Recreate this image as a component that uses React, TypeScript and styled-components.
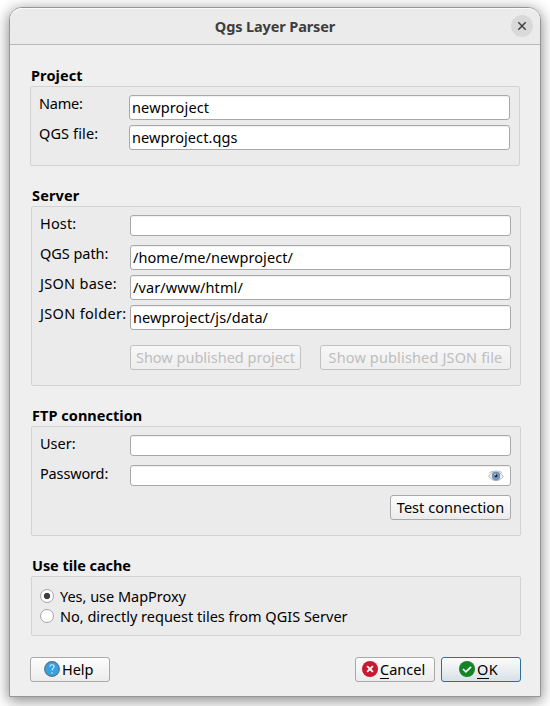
import React from 'react';
import styled, { createGlobalStyle, css } from 'styled-components';

const GlobalStyle = createGlobalStyle`
  *, *::before, *::after { box-sizing: border-box; }
  html, body { margin: 0; height: 100%; overflow: hidden; background: #fff; }
  body, input, button {
    font-family: "Noto Sans", "Open Sans", sans-serif;
    font-size: 14.5px;
    color: #000;
  }
`;

const Desktop = styled.div`
  width: 550px;
  height: 706px;
  padding: 7px 9px 9px;
  overflow: hidden;
`;

const Dialog = styled.main`
  width: 532px;
  height: 690px;
  display: flex;
  flex-direction: column;
  background: #efefef;
  border: 1px solid #969696;
  border-radius: 13px 13px 0 0;
  box-shadow: 0 3px 14px 1px rgba(0, 0, 0, 0.45);
`;

const TitleBar = styled.header`
  height: 37px;
  flex: none;
  display: grid;
  grid-template-columns: 29px 1fr 22px;
  align-items: center;
  padding-right: 7px;
  background: #ebebeb;
  border-bottom: 1px solid #b9b9b9;
  border-radius: 12px 12px 0 0;
  box-shadow: inset 0 1px 0 #fafafa;
`;

const WindowTitle = styled.h1`
  grid-column: 2;
  margin: 0;
  text-align: center;
  font-size: 14.5px;
  line-height: 20px;
  font-weight: 700;
  letter-spacing: -0.12px;
  color: #3d3d3d;
`;

const CloseButton = styled.button`
  width: 22px;
  height: 22px;
  display: flex;
  align-items: center;
  justify-content: center;
  padding: 0;
  border: 0;
  border-radius: 50%;
  background: #d9d9d9;
`;

const Content = styled.div`
  padding: 21px 19px 0 20px;
  display: flex;
  flex-direction: column;
  gap: 20px;
`;

const Section = styled.section<{ $flush?: boolean }>`
  width: 490px;
  margin-left: ${p => (p.$flush ? 0 : 1)}px;
`;

const SectionTitle = styled.h2<{ $track: number }>`
  margin: 0;
  height: 20px;
  padding-left: 1px;
  font-size: 14.5px;
  line-height: 19px;
  font-weight: 700;
  letter-spacing: ${p => p.$track}px;
  white-space: nowrap;
`;

const GroupBox = styled.div<{ $height: number }>`
  height: ${p => p.$height}px;
  padding: 8px 9px 0 8px;
  background: #ebebeb;
  border: 1px solid #d3d3d3;
  border-radius: 2px;
`;

const FormRow = styled.div`
  display: grid;
  grid-template-columns: 90px 381px;
  align-items: start;
  height: 30px;
`;

const FieldLabel = styled.label<{ $track: number }>`
  line-height: 17px;
  letter-spacing: ${p => p.$track}px;
  white-space: nowrap;
`;

const FieldFrame = styled.div<{ $short?: boolean }>`
  height: ${p => (p.$short ? 21 : 25)}px;
  display: flex;
  align-items: center;
  padding-right: 6px;
  background: #fff;
  border: 1px solid #a9a9a9;
  border-radius: 3px;
  box-shadow: inset 0 1px 0 #efefef;
`;

const TextInput = styled.input<{ $track: number }>`
  flex: 1;
  min-width: 0;
  height: 100%;
  padding: 0 0 2px 2px;
  border: 0;
  outline: 0;
  background: transparent;
  letter-spacing: ${p => p.$track}px;
`;

const ButtonRow = styled.div<{ $top: number }>`
  display: flex;
  justify-content: flex-end;
  gap: 19px;
  padding-top: ${p => p.$top}px;
`;

const PushButton = styled.button<{ $width: number; $track: number; $primary?: boolean; $start?: number }>`
  width: ${p => p.$width}px;
  height: 25px;
  flex: none;
  display: flex;
  align-items: center;
  justify-content: ${p => (p.$start === undefined ? 'center' : 'flex-start')};
  gap: 2px;
  padding: 0 0 0 ${p => p.$start ?? 0}px;
  border: 1px solid #a9a9a9;
  border-radius: 3px;
  background: linear-gradient(#fdfdfd, #ececec);
  line-height: 23px;
  letter-spacing: ${p => p.$track}px;
  white-space: nowrap;
  &:disabled {
    color: #bebebe;
    border-color: #c1c1c1;
    background: linear-gradient(#f7f7f7, #eeeeee);
  }
  ${p =>
    p.$primary &&
    css`
      border-color: #2c6f9b;
      background: linear-gradient(#fbfcfd, #d9e1e6);
    `}
`;

const ButtonIcon = styled.svg`
  width: 16px;
  height: 16px;
  flex: none;
  margin-top: -1px;
`;

const Mnemonic = styled.span`
  display: inline-block;
  height: 19px;
  line-height: 19px;
  border-bottom: 1px solid #000;
`;

const Caption = styled.span`
  display: flex;
  align-items: flex-start;
  height: 19px;
  line-height: 19px;
`;

const RadioRow = styled.label<{ $track: number }>`
  display: flex;
  align-items: center;
  gap: 6px;
  height: 20px;
  line-height: 20px;
  letter-spacing: ${p => p.$track}px;
  white-space: nowrap;
`;

const RadioGroup = styled.div`
  padding-top: 1px;
`;

const Radio = styled.span<{ $checked?: boolean }>`
  width: 14px;
  height: 14px;
  flex: none;
  border: 1px solid #a6a6a6;
  border-radius: 50%;
  background: ${p => (p.$checked ? 'radial-gradient(circle, #3f3f3f 2.8px, #fff 3.6px)' : '#fff')};
`;

const Footer = styled.footer`
  display: flex;
  gap: 6px;
  margin: 1px 0 0;
`;

const Spacer = styled.div`
  flex: 1;
`;

const EyeIcon = () => (
  <svg width="16" height="12" viewBox="0 0 16 12">
    <path d="M.7 6.4C3 2.7 5.3 2 8 2s5 1.1 7.3 4.5C13 9.6 10.6 10.5 8 10.5S3 9.5.7 6.4z" fill="#f5f5f3" stroke="#aaa9a4" strokeWidth=".9" />
    <path d="M1.2 3C4 .6 11.5.3 14.2 2.8" fill="none" stroke="#bab9b4" strokeWidth="1" />
    <circle cx="8" cy="6" r="4" fill="#7197bf" stroke="#5d7fa3" strokeWidth=".5" />
    <circle cx="8" cy="5.8" r="1.5" fill="#17212e" />
    <circle cx="7.2" cy="4.7" r=".8" fill="#dce8f4" />
  </svg>
);

interface FieldProps {
  label: string;
  labelTrack: number;
  value?: string;
  track?: number;
  children?: React.ReactNode;
}

const Field = ({ label, labelTrack, value = '', track = 0, children }: FieldProps) => (
  <FormRow>
    <FieldLabel $track={labelTrack}>{label}</FieldLabel>
    <FieldFrame $short={!value}>
      <TextInput $track={track} defaultValue={value} aria-label={label} />
      {children}
    </FieldFrame>
  </FormRow>
);

export default function App() {
  return (
    <>
      <GlobalStyle />
      <Desktop>
        <Dialog>
          <TitleBar>
            <WindowTitle>Qgs Layer Parser</WindowTitle>
            <CloseButton aria-label="Close">
              <svg width="10" height="10" viewBox="0 0 10 10">
                <path d="M1.3 1.3l7.4 7.4M8.7 1.3L1.3 8.7" stroke="#3d3d3d" strokeWidth="1.4" />
              </svg>
            </CloseButton>
          </TitleBar>
          <Content>
            <Section $flush>
              <SectionTitle $track={0.1}>Project</SectionTitle>
              <GroupBox $height={80}>
                <Field label="Name:" labelTrack={-0.2} value="newproject" track={0.15} />
                <Field label="QGS file:" labelTrack={0.12} value="newproject.qgs" track={0.07} />
              </GroupBox>
            </Section>
            <Section>
              <SectionTitle $track={0.15}>Server</SectionTitle>
              <GroupBox $height={180}>
                <Field label="Host:" labelTrack={0.15} />
                <Field label="QGS path:" labelTrack={-0.04} value="/home/me/newproject/" track={0.07} />
                <Field label="JSON base:" labelTrack={0.28} value="/var/www/html/" track={0.08} />
                <Field label="JSON folder:" labelTrack={0.33} value="newproject/js/data/" track={0.11} />
                <ButtonRow $top={10}>
                  <PushButton disabled $width={171} $track={0}>Show published project</PushButton>
                  <PushButton disabled $width={191} $track={0.15}>Show published JSON file</PushButton>
                </ButtonRow>
              </GroupBox>
            </Section>
            <Section>
              <SectionTitle $track={0.04}>FTP connection</SectionTitle>
              <GroupBox $height={110}>
                <Field label="User:" labelTrack={0} />
                <Field label="Password:" labelTrack={-0.15}>
                  <EyeIcon />
                </Field>
                <ButtonRow $top={0}>
                  <PushButton $width={121} $track={0.05}>Test connection</PushButton>
                </ButtonRow>
              </GroupBox>
            </Section>
            <Section>
              <SectionTitle $track={-0.06}>Use tile cache</SectionTitle>
              <GroupBox $height={60}>
                <RadioGroup>
                  <RadioRow $track={-0.02}><Radio $checked />Yes, use MapProxy</RadioRow>
                  <RadioRow $track={0}><Radio />No, directly request tiles from QGIS Server</RadioRow>
                </RadioGroup>
              </GroupBox>
            </Section>
            <Footer>
              <PushButton $width={80} $track={-0.05} $start={13}>
                <ButtonIcon viewBox="0 0 16 16">
                  <circle cx="8" cy="8" r="7.4" fill="#35a2e5" stroke="#5d7180" strokeWidth="1.1" />
                  <path d="M5.9 5.6c.2-1.4 1-1.9 2.1-1.9 1.2 0 2.1.7 2.1 1.9 0 1.5-2 1.8-2 3.8M8.1 11v1.4" fill="none" stroke="#d9effb" strokeWidth="1.1" />
                </ButtonIcon>
                Help
              </PushButton>
              <Spacer />
              <PushButton $width={80} $track={0} $start={6}>
                <ButtonIcon viewBox="0 0 16 16">
                  <circle cx="8" cy="8" r="8" fill="#c9182f" />
                  <path d="M5.1 5.1l5.8 5.8M10.9 5.1l-5.8 5.8" stroke="#fff" strokeWidth="1.9" />
                </ButtonIcon>
                <Caption><Mnemonic>C</Mnemonic>ancel</Caption>
              </PushButton>
              <PushButton $width={80} $track={0.3} $start={17} $primary>
                <ButtonIcon viewBox="0 0 16 16">
                  <circle cx="8" cy="8" r="8" fill="#138526" />
                  <path d="M4 8l2.9 2.9 5.2-5" fill="none" stroke="#fff" strokeWidth="1.7" />
                </ButtonIcon>
                <Caption><Mnemonic>O</Mnemonic>K</Caption>
              </PushButton>
            </Footer>
          </Content>
        </Dialog>
      </Desktop>
    </>
  );
}
